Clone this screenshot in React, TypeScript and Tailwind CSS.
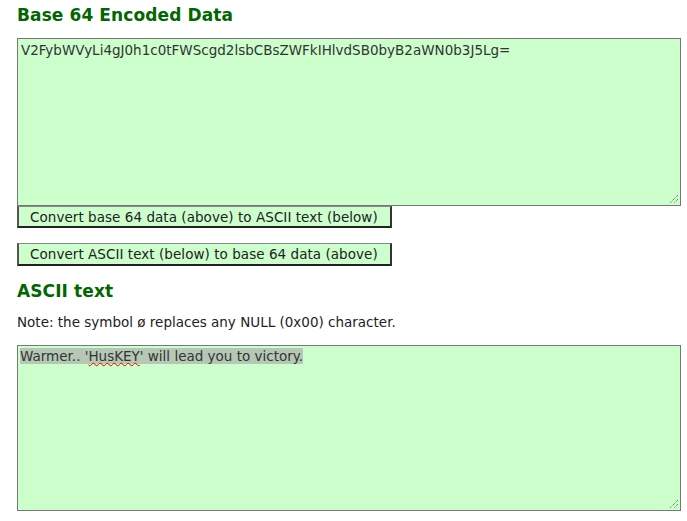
import React from "react";

const Grip = () => (
  <svg className="absolute right-[1px] bottom-[1px]" width="10" height="10" viewBox="0 0 10 10">
    <line x1="9" y1="1" x2="1" y2="9" stroke="#555" strokeWidth="1" strokeDasharray="1 1" />
    <line x1="9" y1="5" x2="5" y2="9" stroke="#555" strokeWidth="1" strokeDasharray="1 1" />
  </svg>
);

export default function App() {
  return (
    <div className="bg-white w-[687px] h-[521px] overflow-hidden pl-[17px] text-[13.5px] text-[#222]" style={{ fontFamily: '"DejaVu Sans", Verdana, sans-serif' }}>
      <h2 className="text-[17px] font-bold text-[#006600] pt-[4px] leading-[22px] tracking-[0.1px]">Base 64 Encoded Data</h2>
      <div className="relative mt-[12px] w-[664px] h-[168px] bg-[#ccffcc] border border-[#777] px-[3px] py-[3px] text-[#333] leading-[16px]">
        V2FybWVyLi4gJ0h1c0tFWScgd2lsbCBsZWFkIHlvdSB0byB2aWN0b3J5Lg=
        <Grip />
      </div>
      <button className="block w-[375px] h-[22px] bg-[#ccffcc] border-t border-t-[#888] border-l-2 border-l-[#555] border-r-2 border-r-[#333] border-b-2 border-b-[#222] text-[13.5px] tracking-[0.05px] leading-[16px] text-[#222] text-left pl-[11px]">
        Convert base 64 data (above) to ASCII text (below)
      </button>
      <button className="block mt-[15px] w-[375px] h-[23px] bg-[#ccffcc] border-t border-t-[#888] border-l-2 border-l-[#555] border-r-2 border-r-[#333] border-b-2 border-b-[#222] text-[13.5px] tracking-[0.05px] leading-[16px] text-[#222] text-left pl-[11px]">
        Convert ASCII text (below) to base 64 data (above)
      </button>
      <h2 className="text-[17px] font-bold text-[#006600] mt-[14px] leading-[22px] tracking-[0.1px]">ASCII text</h2>
      <p className="mt-[12px] leading-[16px]">Note: the symbol ø replaces any NULL (0x00) character.</p>
      <div className="relative mt-[15px] w-[664px] h-[166px] bg-[#ccffcc] border border-[#777] px-[2px] py-[2px] text-[#333] leading-[17px]">
        <span className="bg-[#b5c7b5]">
          Warmer.. '<span className="underline decoration-wavy decoration-[#e00] decoration-1">HusKEY</span>' will lead you to victory.
        </span>
        <Grip />
      </div>
    </div>
  );
}
